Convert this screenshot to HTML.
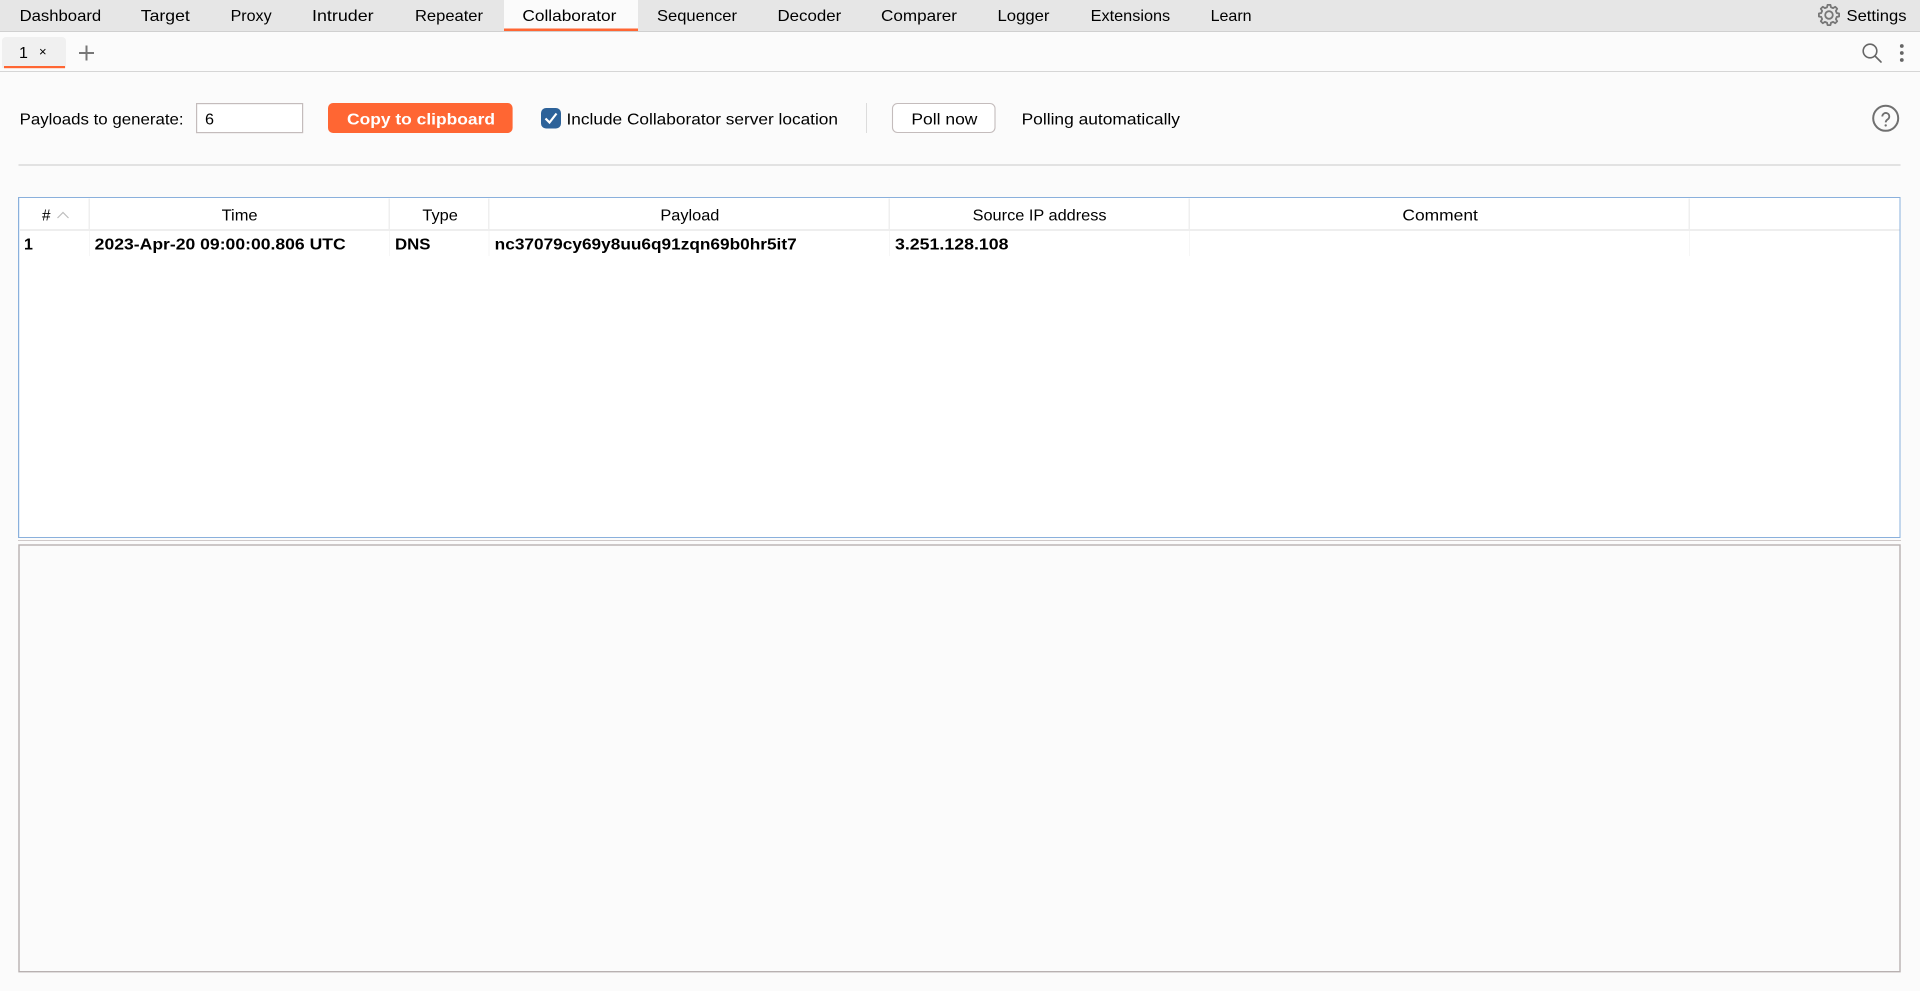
<!DOCTYPE html>
<html lang="en">
<head>
<meta charset="utf-8">
<title>Collaborator</title>
<style>
html,body{margin:0;padding:0;width:1920px;height:991px;overflow:hidden;background:#fbfbfb}
svg{display:block;position:absolute;left:0;top:0}
text{font-family:"Liberation Sans",sans-serif;font-size:16px;fill:#000}
.b{font-weight:bold}
</style>
</head>
<body>
<svg width="1920" height="991" viewBox="0 0 1920 991" xmlns="http://www.w3.org/2000/svg">
<rect width="1920" height="991" fill="#fbfbfb"/>

<!-- top nav -->
<rect x="0" y="0" width="1920" height="31" fill="#e6e6e6"/>
<rect x="0" y="31" width="1920" height="1" fill="#d0d0d0"/>
<rect x="504" y="0" width="134" height="31" fill="#fbfbfb"/>
<rect x="504" y="28.5" width="134" height="2.5" fill="#ff6633"/>
<text x="19.6" y="21" textLength="81.6" lengthAdjust="spacingAndGlyphs">Dashboard</text>
<text x="140.8" y="21" textLength="49" lengthAdjust="spacingAndGlyphs">Target</text>
<text x="230.6" y="21" textLength="41" lengthAdjust="spacingAndGlyphs">Proxy</text>
<text x="312" y="21" textLength="61.6" lengthAdjust="spacingAndGlyphs">Intruder</text>
<text x="415" y="21" textLength="68" lengthAdjust="spacingAndGlyphs">Repeater</text>
<text x="522.4" y="21" textLength="94" lengthAdjust="spacingAndGlyphs">Collaborator</text>
<text x="657" y="21" textLength="80" lengthAdjust="spacingAndGlyphs">Sequencer</text>
<text x="777.5" y="21" textLength="63.7" lengthAdjust="spacingAndGlyphs">Decoder</text>
<text x="881" y="21" textLength="76" lengthAdjust="spacingAndGlyphs">Comparer</text>
<text x="997.5" y="21" textLength="52" lengthAdjust="spacingAndGlyphs">Logger</text>
<text x="1090.6" y="21" textLength="79.6" lengthAdjust="spacingAndGlyphs">Extensions</text>
<text x="1210.6" y="21" textLength="41" lengthAdjust="spacingAndGlyphs">Learn</text>
<text x="1846.5" y="21" textLength="60" lengthAdjust="spacingAndGlyphs">Settings</text>

<!-- gear -->
<g transform="translate(1829 15)" fill="none" stroke="#777" stroke-width="1.8" stroke-linejoin="round">
<path d="M7.76 1.94L6.86 4.12L8.2 6.2L6.2 8.2L4.12 6.86L1.94 7.76L1.46 10.1L-1.46 10.1L-1.94 7.76L-4.12 6.86L-6.2 8.2L-8.2 6.2L-6.86 4.12L-7.76 1.94L-10.1 1.46L-10.1 -1.46L-7.76 -1.94L-6.86 -4.12L-8.2 -6.2L-6.2 -8.2L-4.12 -6.86L-1.94 -7.76L-1.46 -10.1L1.46 -10.1L1.94 -7.76L4.12 -6.86L6.2 -8.2L8.2 -6.2L6.86 -4.12L7.76 -1.94L10.1 -1.46L10.1 1.46Z"/>
<circle r="3.8"/>
</g>

<!-- sub tab row -->
<rect x="0" y="71" width="1920" height="1" fill="#d6d6d6"/>
<path d="M2 68V41a4 4 0 0 1 4-4H62a4 4 0 0 1 4 4V68Z" fill="#f0f0f0"/>
<rect x="4" y="66" width="61" height="2.2" fill="#ff6633"/>
<text x="19" y="58">1</text>
<text x="39" y="56" style="font-size:13px">×</text>
<path d="M86.5 45.5V60.5M79 53H94" stroke="#777" stroke-width="2" fill="none"/>
<g fill="none" stroke="#666" stroke-width="1.6">
<circle cx="1870" cy="51" r="6.8"/>
<path d="M1875 56L1881 62" stroke-linecap="round"/>
</g>
<circle cx="1901.8" cy="46" r="1.9" fill="#666"/>
<circle cx="1901.8" cy="53" r="1.9" fill="#666"/>
<circle cx="1901.8" cy="60" r="1.9" fill="#666"/>

<!-- controls -->
<text x="19.6" y="124.5" textLength="164" lengthAdjust="spacingAndGlyphs">Payloads to generate:</text>
<rect x="196.6" y="103.6" width="106" height="29" fill="#fff" stroke="#c4bcbc" stroke-width="1.2"/>
<text x="205" y="124.5" textLength="9" lengthAdjust="spacingAndGlyphs">6</text>
<rect x="328" y="103" width="184.6" height="30" rx="5" fill="#ff6633"/>
<text class="b" x="347" y="124.5" textLength="148" lengthAdjust="spacingAndGlyphs" style="fill:#fff">Copy to clipboard</text>
<rect x="541" y="108" width="20" height="20.5" rx="5" fill="#2d6299"/>
<path d="M545.5 118.5L549.5 122.5L556.5 113.5" fill="none" stroke="#fff" stroke-width="2.2"/>
<text x="566.5" y="124.5" textLength="271.5" lengthAdjust="spacingAndGlyphs">Include Collaborator server location</text>
<rect x="866" y="103" width="1" height="30" fill="#dcdcdc"/>
<rect x="892.5" y="103.5" width="102.5" height="29" rx="5" fill="#fff" stroke="#c4bcbc" stroke-width="1.1"/>
<text x="911.4" y="124.5" textLength="66" lengthAdjust="spacingAndGlyphs">Poll now</text>
<text x="1021.6" y="124.5" textLength="158.4" lengthAdjust="spacingAndGlyphs">Polling automatically</text>
<circle cx="1885.7" cy="118.3" r="12.5" fill="none" stroke="#707070" stroke-width="2"/>
<path d="M1882.3 116.5a3.5 3.5 0 1 1 5.4 2.9c-1.3.8-2 1.4-2 3" fill="none" stroke="#707070" stroke-width="1.8"/>
<circle cx="1885.7" cy="125.4" r="1.2" fill="#707070"/>

<rect x="18.5" y="164" width="1882" height="2" fill="#e2e2e2"/>

<!-- table -->
<rect x="18.5" y="197.5" width="1881.5" height="340" fill="#fff" stroke="#8ab0dc" stroke-width="1"/>
<rect x="19" y="198" width="1" height="339" fill="#e3eefa"/>
<rect x="20" y="229" width="1879.5" height="2" fill="#eeeeee"/>
<g fill="#efefef">
<rect x="88.5" y="198.5" width="1.5" height="30.5"/>
<rect x="388.5" y="198.5" width="1.5" height="30.5"/>
<rect x="488" y="198.5" width="1.5" height="30.5"/>
<rect x="888.5" y="198.5" width="1.5" height="30.5"/>
<rect x="1188.5" y="198.5" width="1.5" height="30.5"/>
<rect x="1688.5" y="198.5" width="1.5" height="30.5"/>
</g>
<g fill="#f6f6f6">
<rect x="89" y="231" width="1" height="25"/>
<rect x="389" y="231" width="1" height="25"/>
<rect x="488.5" y="231" width="1" height="25"/>
<rect x="889" y="231" width="1" height="25"/>
<rect x="1189" y="231" width="1" height="25"/>
<rect x="1689" y="231" width="1" height="25"/>
</g>
<text x="42" y="220.7" textLength="8.5" lengthAdjust="spacingAndGlyphs">#</text>
<path d="M57.5 218L63 212.5L68.5 218" fill="none" stroke="#bdbdbd" stroke-width="1.2"/>
<text x="221.6" y="220.7" textLength="36" lengthAdjust="spacingAndGlyphs">Time</text>
<text x="422.4" y="220.7" textLength="35.5" lengthAdjust="spacingAndGlyphs">Type</text>
<text x="660.4" y="220.7" textLength="59" lengthAdjust="spacingAndGlyphs">Payload</text>
<text x="972.6" y="220.7" textLength="134" lengthAdjust="spacingAndGlyphs">Source IP address</text>
<text x="1402.4" y="220.7" textLength="75.5" lengthAdjust="spacingAndGlyphs">Comment</text>

<text class="b" x="24" y="249.3">1</text>
<text class="b" x="94.7" y="249.3" textLength="251" lengthAdjust="spacingAndGlyphs">2023-Apr-20 09:00:00.806 UTC</text>
<text class="b" x="395" y="249.3" textLength="35.5" lengthAdjust="spacingAndGlyphs">DNS</text>
<text class="b" x="494.7" y="249.3" textLength="302" lengthAdjust="spacingAndGlyphs">nc37079cy69y8uu6q91zqn69b0hr5it7</text>
<text class="b" x="895" y="249.3" textLength="113.5" lengthAdjust="spacingAndGlyphs">3.251.128.108</text>

<!-- splitter and lower panel -->
<rect x="18" y="540" width="1883" height="1" fill="#cfc9c9"/>
<rect x="19" y="545" width="1881" height="426.7" fill="#fbfbfb" stroke="#b8b1b1" stroke-width="1.4"/>
</svg>
</body>
</html>
